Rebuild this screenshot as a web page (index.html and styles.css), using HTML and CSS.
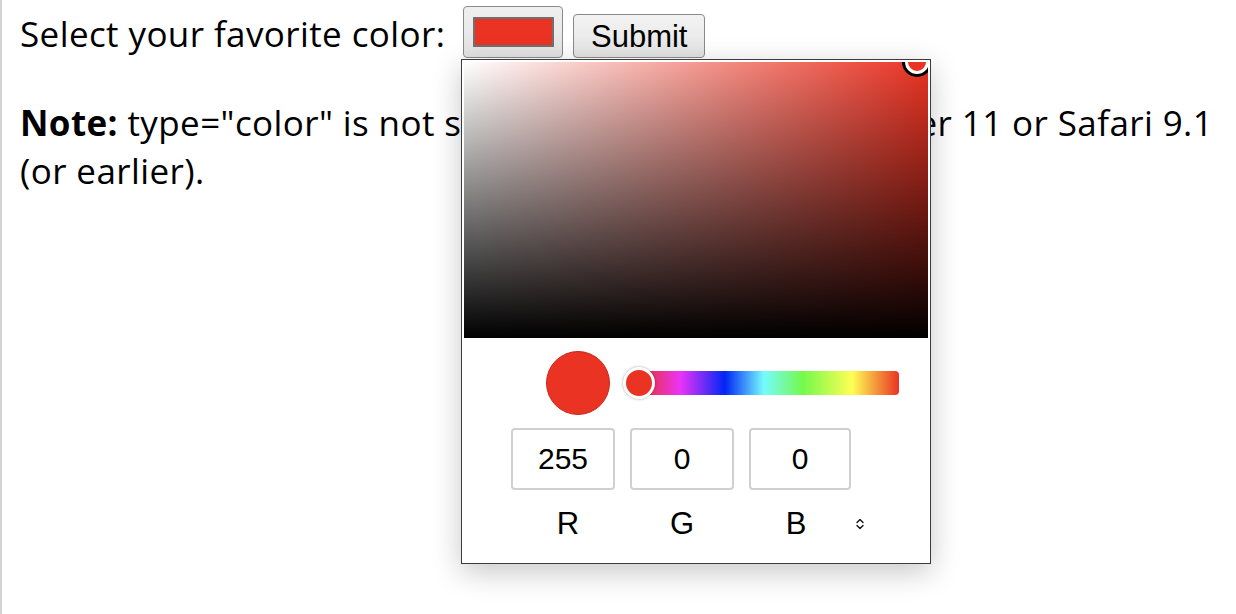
FILE: index.html
```html
<!DOCTYPE html>
<html lang="en">
<head>
  <meta charset="UTF-8" />
  <meta name="viewport" content="width=device-width, initial-scale=1.0"/>
  <title>Color input</title>
  <link rel="stylesheet" href="styles.css">
</head>
<body>
  <form class="pick-row">
    <span class="pick-label">Select your favorite color:</span>
    <span class="color-well"><span class="color-swatch"></span></span>
    <button type="button" class="submit-btn">Submit</button>
  </form>

  <p class="note"><strong>Note:</strong> type="color" is not supported in Internet Explorer 11 or Safari 9.1 (or earlier).</p>

  <!-- open picker popup -->
  <div class="picker">
    <div class="sat-area">
      <span class="sat-marker"></span>
    </div>

    <div class="hue-row">
      <span class="preview"></span>
      <div class="hue-bar">
        <span class="hue-thumb"></span>
      </div>
    </div>

    <div class="rgb-inputs">
      <div class="rgb-box">255</div>
      <div class="rgb-box">0</div>
      <div class="rgb-box">0</div>
    </div>

    <div class="rgb-labels">
      <span class="rgb-label">R</span>
      <span class="rgb-label">G</span>
      <span class="rgb-label">B</span>
      <svg class="mode-toggle" width="14" height="14" viewBox="0 0 14 14">
        <path d="M4 5.5 L7 2.5 L10 5.5 M4 8.5 L7 11.5 L10 8.5" fill="none" stroke="#111" stroke-width="1.4" stroke-linecap="round" stroke-linejoin="round"/>
      </svg>
    </div>
  </div>
</body>
</html>
```

FILE: styles.css
```css
body {
  margin: 0;
  padding: 0 10px 0 18px;
  min-height: 614px;
  box-sizing: border-box;
  border-left: 2px solid #d4d4d4;
  font-family: 'Open Sans', 'Noto Sans', sans-serif;
  font-size: 35px;
  letter-spacing: 0.4px;
  color: #000;
  background: #fff;
}

.pick-row {
  display: flex;
  align-items: flex-end;
  padding-top: 6px;
  margin: 0;
}

.pick-label {
  line-height: 48px;
  margin-bottom: 0;
}

.color-well {
  display: flex;
  align-items: center;
  justify-content: center;
  width: 100px;
  height: 52px;
  margin-left: 18px;
  box-sizing: border-box;
  border: 1px solid #8a8a8a;
  border-radius: 4px;
  background: linear-gradient(#efefef, #e3e3e3);
}

.color-swatch {
  width: 81px;
  height: 30px;
  box-sizing: border-box;
  border: 2px solid #707070;
  background: #ea3323;
}

.submit-btn {
  height: 44px;
  width: 132px;
  margin-left: 10px;
  padding: 2px 0 0;
  font-family: 'Liberation Sans', Arial, sans-serif;
  font-size: 31px;
  letter-spacing: 0;
  color: #000;
  border: 1px solid #8a8a8a;
  border-radius: 4px;
  background: linear-gradient(#f3f3f3, #e4e4e4);
}

.note {
  margin: 41px 0 0;
  line-height: 48px;
}

.picker {
  position: absolute;
  left: 461px;
  top: 59px;
  width: 470px;
  height: 505px;
  box-sizing: border-box;
  border: 1px solid #3c3c3c;
  background: #fff;
  padding: 2px;
  box-shadow: 0 8px 28px rgba(0, 0, 0, 0.22);
  font-family: 'Liberation Sans', Arial, sans-serif;
  letter-spacing: 0;
}

.sat-area {
  position: relative;
  height: 276px;
  overflow: hidden;
  background:
    linear-gradient(to top, #000, rgba(0, 0, 0, 0)),
    linear-gradient(to right, #fff, #ea3323);
}

.sat-marker {
  position: absolute;
  right: -1px;
  top: -12px;
  width: 18px;
  height: 18px;
  border-radius: 50%;
  background: #ea3323;
  border: 3px solid #fff;
  box-shadow: 0 0 0 3px #000;
}

.hue-row {
  display: flex;
  align-items: center;
  padding: 13px 0 0 82px;
}

.preview {
  width: 64px;
  height: 64px;
  box-sizing: border-box;
  border-radius: 50%;
  background: #ea3323;
  border: 1px solid #c52a1c;
}

.hue-bar {
  position: relative;
  width: 260px;
  height: 24px;
  margin-left: 29px;
  border-radius: 0 4px 4px 0;
  background: linear-gradient(to right,
    #ea3323 0%, #ea33f7 16%, #0026f5 33%, #75fbfd 48%,
    #75f94c 63%, #fffe54 82%, #ea3323 100%);
}

.hue-thumb {
  position: absolute;
  left: -16px;
  top: -4px;
  width: 26px;
  height: 26px;
  border-radius: 50%;
  background: #ea3323;
  border: 3px solid #fff;
  box-shadow: 0 0 3px rgba(0, 0, 0, 0.35);
}

.rgb-inputs {
  display: flex;
  gap: 15px;
  padding: 13px 0 0 47px;
}

.rgb-box {
  width: 104px;
  height: 62px;
  box-sizing: border-box;
  border: 2px solid #d0d0d0;
  border-radius: 4px;
  display: flex;
  align-items: center;
  justify-content: center;
  font-size: 30px;
}

.rgb-box:last-child {
  width: 102px;
}

.rgb-labels {
  display: flex;
  align-items: center;
  padding: 17px 0 0 47px;
}

.rgb-label {
  width: 114px;
  text-align: center;
  font-size: 31px;
  line-height: 34px;
}
```
